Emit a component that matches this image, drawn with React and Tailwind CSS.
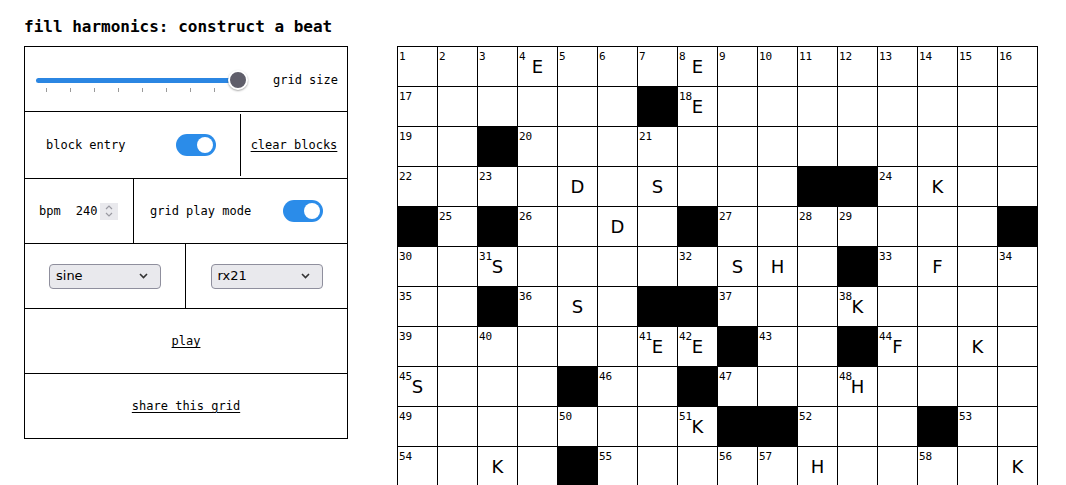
import React from 'react';

const ROWS = [
    '...E...E........',
    '......#E........',
    '..#.............',
    '....D.S...##.K..',
    '#.#..D.#.......#',
    '..S.....SH.#.F..',
    '..#.S.##...K....',
    '......EE#..#F.K.',
    'S...#..#...H....',
    '.......K##...#..',
    '..K.#.....H....K',
];

// number a cell when it starts after an edge or a block
const buildCells = () => {
    let n = 0;
    return ROWS.map((row, r) =>
        row.split('').map((ch, c) => {
            if (ch === '#') return { block: true };
            const leftOpen = c === 0 || ROWS[r][c - 1] === '#';
            const topOpen = r === 0 || ROWS[r - 1][c] === '#';
            const num = leftOpen || topOpen ? ++n : null;
            return { block: false, num, letter: ch === '.' ? '' : ch };
        })
    );
};

const Toggle = () => (
    <div className="w-[40px] h-[22px] rounded-full bg-[#2b8ce9] flex items-center justify-end pr-[3px]">
        <div className="w-[16px] h-[16px] rounded-full bg-white"></div>
    </div>
);

const Chevron = () => (
    <svg width="9" height="6" viewBox="0 0 9 6" className="text-[#333]">
        <path d="M1 1l3.5 3.5L8 1" fill="none" stroke="currentColor" strokeWidth="1.6" />
    </svg>
);

const Select = ({ value }) => (
    <div className="w-[112px] h-[25px] bg-[#e9e9ed] border border-[#8f8f9d] rounded-[4px] flex items-center justify-between pl-[6px] pr-[12px] font-['DejaVu_Sans',sans-serif] text-[13px] text-black">
        <span>{value}</span>
        <Chevron />
    </div>
);

const Slider = () => (
    <div className="relative w-[212px] h-[30px]">
        <div className="absolute left-0 top-[13px] w-[200px] h-[5px] rounded-full bg-[#2b86e2]"></div>
        {[...Array(8)].map((_, i) => (
            <div
                key={i}
                className="absolute top-[23px] w-[1px] h-[4px] bg-[#9a9a9a]"
                style={{ left: `${10 + i * 24}px` }}
            ></div>
        ))}
        <div className="absolute left-[192px] top-[5px] w-[20px] h-[20px] rounded-full bg-[#5f5e6a] border-2 border-white shadow-[0_1px_2px_rgba(0,0,0,0.35)]"></div>
    </div>
);

export default function App() {
    const cells = buildCells();

    return (
        <div className="min-h-screen bg-white text-black font-['DejaVu_Sans_Mono',monospace]">
            <div className="pl-[24px] pt-[15px]">
                <h1 className="text-[16px] font-bold leading-[24px] h-[31px]">fill harmonics: construct a beat</h1>

                <div className="flex items-start gap-[49px]">
                    {/* controls */}
                    <div className="w-[324px] shrink-0 border border-black text-[12px]">
                        <div className="h-[65px] border-b border-black flex items-center pl-[11px] pt-[1px]">
                            <Slider />
                            <span className="ml-[25px]">grid size</span>
                        </div>

                        <div className="h-[67px] border-b border-black flex">
                            <div className="w-[216px] my-[2px] border-r border-black flex items-center justify-between pl-[21px] pr-[24px]">
                                <span>block entry</span>
                                <Toggle />
                            </div>
                            <div className="flex-1 flex items-center justify-center">
                                <span className="underline underline-offset-2">clear blocks</span>
                            </div>
                        </div>

                        <div className="h-[65px] border-b border-black flex">
                            <div className="w-[109px] border-r border-black flex items-center pl-[14px]">
                                <span>bpm</span>
                                <span className="ml-[15px]">240</span>
                                <div className="ml-[3px] w-[18px] h-[17px] bg-[#e9e9ed] flex flex-col items-center justify-center gap-[2px]">
                                    <svg width="8" height="5" viewBox="0 0 8 5">
                                        <path d="M1 4l3-3 3 3" fill="none" stroke="#9a9aa2" strokeWidth="1.2" />
                                    </svg>
                                    <svg width="8" height="5" viewBox="0 0 8 5">
                                        <path d="M1 1l3 3 3-3" fill="none" stroke="#9a9aa2" strokeWidth="1.2" />
                                    </svg>
                                </div>
                            </div>
                            <div className="flex-1 flex items-center justify-between pl-[16px] pr-[24px]">
                                <span>grid play mode</span>
                                <Toggle />
                            </div>
                        </div>

                        <div className="h-[65px] border-b border-black flex">
                            <div className="w-[161px] border-r border-black flex items-center justify-center">
                                <Select value="sine" />
                            </div>
                            <div className="flex-1 flex items-center justify-center">
                                <Select value="rx21" />
                            </div>
                        </div>

                        <div className="h-[65px] border-b border-black flex items-center justify-center">
                            <span className="underline underline-offset-2">play</span>
                        </div>

                        <div className="h-[64px] flex items-center justify-center">
                            <span className="underline underline-offset-2">share this grid</span>
                        </div>
                    </div>

                    {/* crossword grid */}
                    <div className="grid grid-cols-[repeat(16,40px)] border-l border-t border-black">
                        {cells.flat().map((cell, i) =>
                            cell.block ? (
                                <div key={i} className="w-[40px] h-[40px] bg-black border-r border-b border-black"></div>
                            ) : (
                                <div
                                    key={i}
                                    className="relative w-[40px] h-[40px] border-r border-b border-black flex items-center justify-center"
                                >
                                    {cell.num && (
                                        <span className="absolute top-[4px] left-[1px] text-[11px] leading-none">{cell.num}</span>
                                    )}
                                    <span className="font-['DejaVu_Sans',sans-serif] text-[18px] leading-none">{cell.letter}</span>
                                </div>
                            )
                        )}
                    </div>
                </div>
            </div>
        </div>
    );
}
